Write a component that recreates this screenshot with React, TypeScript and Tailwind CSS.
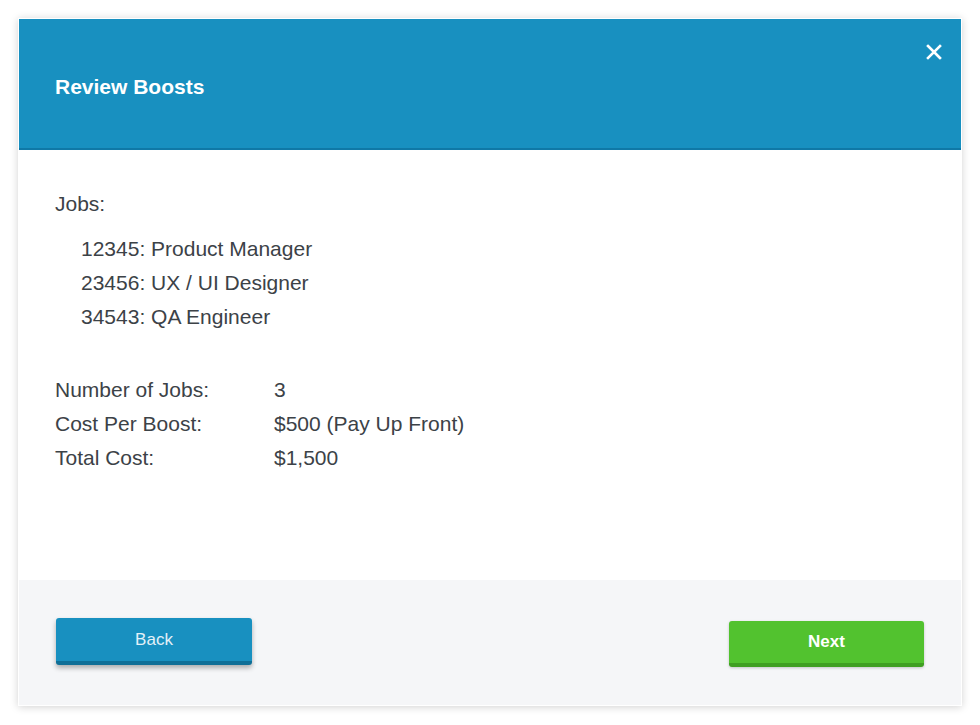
export default function App() {
  const jobs = ["12345: Product Manager", "23456: UX / UI Designer", "34543: QA Engineer"];
  const summary: [string, string][] = [
    ["Number of Jobs:", "3"],
    ["Cost Per Boost:", "$500 (Pay Up Front)"],
    ["Total Cost:", "$1,500"],
  ];

  return (
    <div className="min-h-screen bg-white pt-[18px] pl-[18px] font-['Liberation_Sans',Arial,sans-serif]">
      <div className="w-[944px] border border-white bg-white shadow-[0_1px_8px_rgba(0,0,0,0.18)]">
        {/* Header */}
        <div className="relative h-[131px] bg-[#1890c0] border-b-2 border-[#0f78a6] flex items-center pl-[36px] pt-[6px]">
          <h2 className="text-[21px] font-bold text-white">Review Boosts</h2>
          <button className="absolute top-[25px] right-[19px] w-[16px] h-[16px] text-white">
            <svg viewBox="0 0 16 16" width="16" height="16">
              <path d="M2 2L14 14M14 2L2 14" stroke="currentColor" strokeWidth="2.6" strokeLinecap="square" />
            </svg>
          </button>
        </div>

        {/* Body */}
        <div className="h-[430px] pt-[37px] pl-[36px] text-[21px] leading-[34px] text-[#3c4247]">
          <p>Jobs:</p>
          <ul className="mt-[11px] pl-[26px]">
            {jobs.map((j) => (
              <li key={j}>{j}</li>
            ))}
          </ul>
          <div className="mt-[39px]">
            {summary.map(([label, value]) => (
              <div key={label} className="flex">
                <span className="w-[219px]">{label}</span>
                <span>{value}</span>
              </div>
            ))}
          </div>
        </div>

        {/* Footer */}
        <div className="h-[125px] bg-[#f5f6f8] flex justify-between px-[37px]">
          <button className="mt-[38px] w-[196px] h-[47px] rounded-[3px] bg-[#1890c0] border-b-4 border-[#0f6f97] shadow-[0_3px_5px_rgba(0,0,0,0.3)] text-[17px] text-[#e3f1f8]">
            Back
          </button>
          <button className="mt-[41px] w-[195px] h-[46px] rounded-[3px] bg-[#52c22f] border-b-4 border-[#3f9f22] shadow-[0_1px_3px_rgba(0,0,0,0.2)] text-[17px] font-bold text-white">
            Next
          </button>
        </div>
      </div>
    </div>
  );
}
